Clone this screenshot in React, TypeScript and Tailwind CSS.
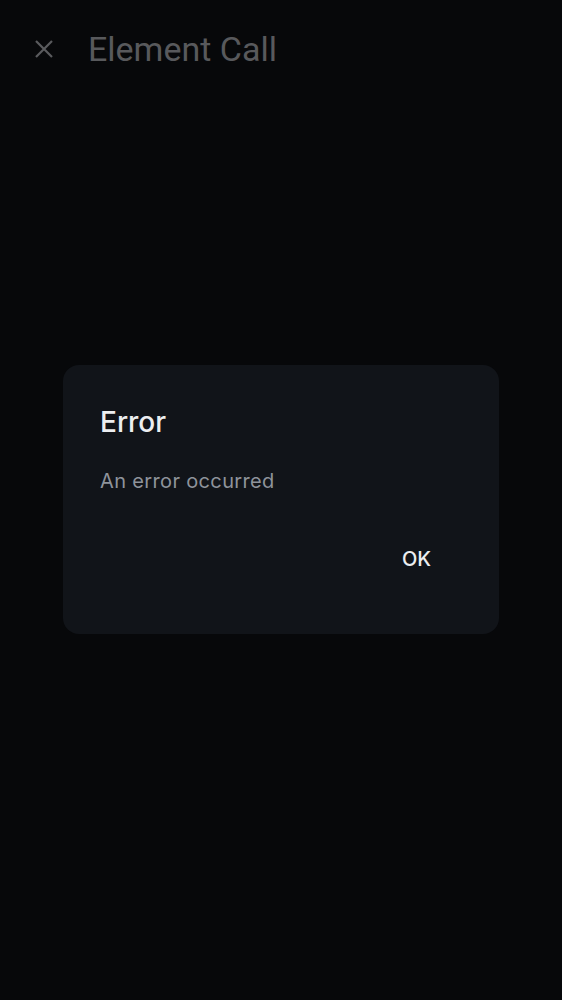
import React from "react";

export default function App() {
  return (
    <div className="w-[562px] h-[1000px] bg-[#07080a] flex flex-col" style={{ fontFamily: "Roboto, 'Noto Sans', sans-serif" }}>
      <div className="h-[100px] flex items-center pl-[34px] pb-[2px]">
        <svg width="20" height="20" viewBox="0 0 20 20" className="shrink-0">
          <path d="M2 2 L18 18 M18 2 L2 18" stroke="#5a5b5e" strokeWidth="2.2" strokeLinecap="butt" />
        </svg>
        <span className="ml-[34px] text-[34px] text-[#58595c] leading-none">Element Call</span>
      </div>
      <div className="flex-1 flex flex-col items-center" style={{ fontFamily: "Inter, Roboto, sans-serif" }}>
        <div className="mt-[265px] w-[436px] h-[269px] rounded-[16px] bg-[#111419] flex flex-col pl-[37px] pr-[68px]">
          <div className="mt-[39px] text-[28px] font-medium text-[#eceef0] leading-[36px]">Error</div>
          <div className="mt-[27px] text-[20px] text-[#8e939b] leading-[28px] tracking-[0.35px]">An error occurred</div>
          <div className="mt-[50px] flex justify-end">
            <span className="text-[20px] font-medium text-[#eceef0] leading-[28px]">OK</span>
          </div>
        </div>
      </div>
    </div>
  );
}
